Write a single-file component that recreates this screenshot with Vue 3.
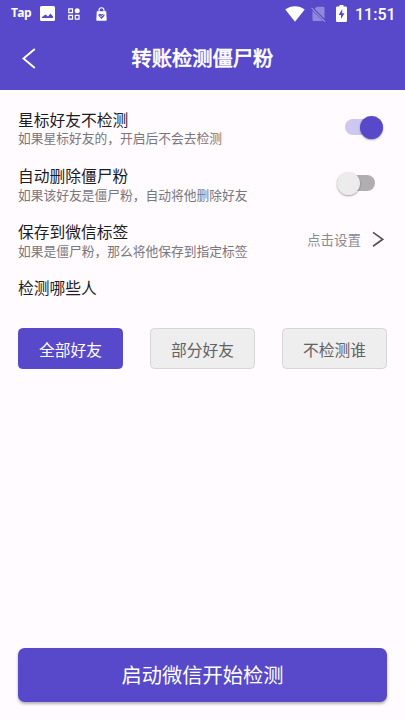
<script setup>
import { ref } from 'vue'

const switches = ref([
  { label: '星标好友不检测', desc: '如果星标好友的，开启后不会去检测', on: true },
  { label: '自动删除僵尸粉', desc: '如果该好友是僵尸粉，自动将他删除好友', on: false },
])
const targets = ['全部好友', '部分好友', '不检测谁']
const selected = ref(0)
</script>

<template>
  <div class="screen">
    <header class="top">
      <div class="status">
        <span class="tap">Tap</span>
        <svg class="pic" width="15" height="15" viewBox="0 0 15 15">
          <path fill="#fff" fill-rule="evenodd" d="M1.5 0h12A1.5 1.5 0 0 1 15 1.500v12a1.500 1.500 0 0 1-1.500 1.500h-12A1.500 1.500 0 0 1 0 13.500v-12A1.500 1.500 0 0 1 1.500 0zM2 12h11V10.500l-2.500-3-2.500 3-2.500-2L2 11z" />
        </svg>
        <svg class="grid" width="12" height="12" viewBox="0 0 12 12">
          <g fill="none" stroke="#fff" stroke-width="1.2">
            <path d="M.8.9h3.700v3.700H.8zM.8 7.400h3.700v3.700H.8zM7.300 7.400H11v3.700H7.300z" />
          </g>
          <circle cx="9.200" cy="2.700" r="2.500" fill="#fff" />
        </svg>
        <svg class="bag" width="11" height="14" viewBox="0 0 11 14">
          <path fill="none" stroke="#fff" stroke-width="1.100" d="M3 5V3.200a2.500 2.500 0 0 1 5 0V5" />
          <path fill="#fff" d="M.8 4.300h9.400l.5 8.700a.8.8 0 0 1-.8.700H1.100a.8.8 0 0 1-.8-.7z" />
          <path fill="#5749c9" d="M5.500 12 2.700 9c-1-1.700.9-3.400 2.800-1.600C7.400 5.600 9.300 7.300 8.300 9z" />
          <path fill="none" stroke="#fff" stroke-width=".7" d="m3.700 8.500 1.300 1.200L8 7.200" />
        </svg>
        <span class="spacer"></span>
        <svg class="wifi" width="20" height="16" viewBox="0 0 20 16">
          <path fill="#fff" d="M.3 3.600C5.700-.9 14.300-.9 19.700 3.600L10 15.700z" />
        </svg>
        <svg class="sim" width="15" height="16" viewBox="0 0 15 16">
          <path fill="#fff" opacity=".35" d="M5.700.7h6.500q1.300 0 1.300 1.300v10.800L3.700 2.700zM1.500 4.700 12 15H2.800q-1.300 0-1.300-1.300z" />
          <path stroke="#fff" opacity=".4" stroke-width="1.100" d="m.5 1.800 13.700 14" />
        </svg>
        <svg class="battery" width="11" height="17" viewBox="0 0 11 17">
          <path fill="#fff" d="M3.500 0h4v1.600h2.300q1.200 0 1.200 1.200v12.900Q11 17 9.800 17H1.200Q0 17 0 15.700V2.800q0-1.200 1.200-1.200h2.300z" />
          <path fill="#5749c9" d="M6.300 4 2.600 9.900H5v4.200L8.500 8.300H6.200z" />
        </svg>
        <span class="clock">11:51</span>
      </div>
      <div class="bar">
        <svg class="back" width="14" height="21" viewBox="0 0 14 21">
          <path fill="none" stroke="#fff" stroke-width="1.900" d="M12.800 1 1.500 10.500 12.800 20" />
        </svg>
        <h1>转账检测僵尸粉</h1>
      </div>
    </header>

    <main>
      <section class="settings">
        <div v-for="s in switches" :key="s.label" class="row">
          <div class="text">
            <div class="label">{{ s.label }}</div>
            <div class="desc">{{ s.desc }}</div>
          </div>
          <button class="switch" :class="{ on: s.on }" @click="s.on = !s.on"><i></i></button>
        </div>
        <div class="row">
          <div class="text">
            <div class="label">保存到微信标签</div>
            <div class="desc">如果是僵尸粉，那么将他保存到指定标签</div>
          </div>
          <div class="link">
            <span>点击设置</span>
            <svg width="12" height="18" viewBox="0 0 12 18">
              <path fill="none" stroke="#555" stroke-width="1.700" d="M1 2.400l9.700 6.900L1 16.200" />
            </svg>
          </div>
        </div>
        <div class="label">检测哪些人</div>
      </section>

      <div class="targets">
        <button v-for="(t, i) in targets" :key="t" :class="{ active: selected === i }" @click="selected = i">{{ t }}</button>
      </div>

      <button class="start">启动微信开始检测</button>
    </main>
  </div>
</template>

<style>
body {
  margin: 0;
  background: #fffbff;
}
</style>

<style scoped>
.screen {
  height: 100vh;
  display: flex;
  flex-direction: column;
  background: #fffbff;
  font-family: Roboto, "Noto Sans CJK SC", sans-serif;
  overflow: hidden;
}
svg {
  display: block;
  flex: none;
}
button {
  border: 0;
  padding: 0;
  margin: 0;
  font-family: inherit;
}
.top {
  height: 90px;
  flex: none;
  background: #5749c9;
  color: #fff;
}
.status {
  height: 27px;
  display: flex;
  align-items: center;
  padding: 0 9px 0 11px;
}
.tap {
  width: 29px;
  font: 700 12px/14px "Open Sans", sans-serif;
  letter-spacing: -0.6px;
  padding-bottom: 1px;
}
.grid {
  margin-left: 13px;
}
.bag {
  margin-left: 16px;
}
.spacer {
  flex: 1;
}
.sim {
  margin-left: 6px;
}
.battery {
  margin: 0 8px 1px 10px;
}
.clock {
  font-size: 16px;
  font-weight: 500;
  line-height: 18px;
  width: 41px;
  padding-top: 2px;
  white-space: nowrap;
}
.bar {
  height: 63px;
  display: grid;
  grid-template-columns: 60px 1fr 60px;
  align-items: center;
}
.back {
  margin-left: 22px;
}
h1 {
  margin: 0;
  text-align: center;
  font-size: 20.25px;
  line-height: 30px;
  font-weight: 400;
  -webkit-text-stroke: 0.7px #fff;
}
main {
  flex: 1;
  display: flex;
  flex-direction: column;
  padding: 20px 18px 18px;
}
.settings {
  display: flex;
  flex-direction: column;
  gap: 18px;
}
.row {
  height: 38.25px;
  display: flex;
  justify-content: space-between;
}
.label {
  font-size: 15.75px;
  line-height: 20.25px;
  color: #1c1b1f;
}
.row .label {
  padding-top: 0.8px;
  margin-bottom: -0.8px;
}
.desc {
  font-size: 12.75px;
  line-height: 18px;
  color: #79767d;
}
.switch {
  width: 38px;
  height: 16px;
  margin: 9px 4px 0 0;
  border-radius: 8px;
  background: #b1aeb2;
  align-self: flex-start;
  display: flex;
  align-items: center;
}
.switch:not(.on) {
  margin-right: 12px;
}
.switch i {
  width: 23px;
  height: 23px;
  flex: none;
  border-radius: 50%;
  background: #ececec;
  box-shadow: 0 1px 2px rgba(0, 0, 0, 0.35);
}
.switch.on {
  background: #cdc8ef;
  justify-content: flex-end;
}
.switch.on i {
  background: #5749c9;
}
.link {
  display: flex;
  align-items: center;
  gap: 11px;
  margin-right: 3px;
  height: 33px;
  font-size: 13.5px;
  color: #8c8a8e;
}
.targets {
  display: grid;
  grid-template-columns: repeat(3, 105px);
  justify-content: space-between;
  margin-top: 29.250px;
}
.targets button {
  height: 41px;
  padding-top: 1px;
  border: 1px solid #d6d6d6;
  border-radius: 4.5px;
  background: #eeeeee;
  color: #626262;
  font-size: 15.75px;
}
.targets .active {
  border-color: #5749c9;
  background: #5749c9;
  color: #fff;
}
.start {
  margin-top: auto;
  height: 54px;
  padding-bottom: 2px;
  border-radius: 6.75px;
  background: #5749c9;
  color: #fff;
  font-size: 20.25px;
  box-shadow: 0 2px 3px rgba(0, 0, 0, 0.3);
}
</style>
